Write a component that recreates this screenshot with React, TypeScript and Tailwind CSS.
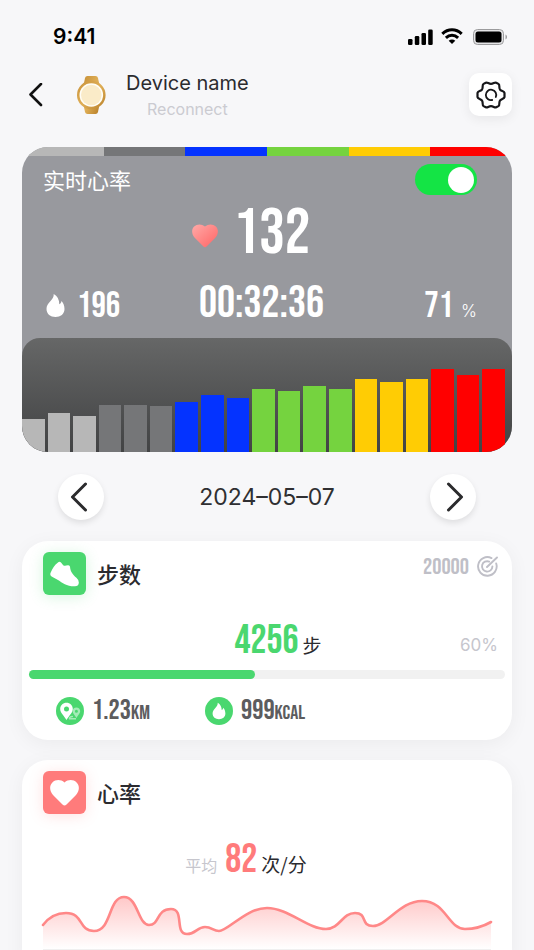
import React, { useState } from "react"

const ZONES = ["bg-[#b7b7b7]", "bg-[#757678]", "bg-[#0433ff]", "bg-[#75d33f]", "bg-[#ffcc04]", "bg-[#ff0000]"]

// zone index + bar height in px
const BARS: [number, number][] = [
  [0, 33], [0, 39], [0, 36],
  [1, 47], [1, 47], [1, 46],
  [2, 50], [2, 57], [2, 54],
  [3, 63], [3, 61], [3, 66], [3, 63],
  [4, 73], [4, 70], [4, 73],
  [5, 83], [5, 77], [5, 83],
]

const NUM = "font-['Bebas_Neue','Roboto_Condensed','Liberation_Sans_Narrow',sans-serif]"
const CJK = "font-['Noto_Sans_CJK_SC',sans-serif]"
const SANS = "font-['Inter','Liberation_Sans',sans-serif]"

const FLAME = "M7.200 0C7.400 2.800 6.200 4.800 3.600 7.600C1.400 10 0 12 0 15C0 20 4 23 9 23C14 23 18 20 18 15C18 11.400 16.600 8.800 15 7C14.800 8.600 14 9.800 12.800 10.200C12.800 5.600 10.800 2 7.200 0Z"
const HEART = "M14.500 25.500Q13.500 25.500 12.500 24.500L3 15C-.6 11-.8 5.600 2.400 2.500C5.600-.6 10.600-.8 14.500 2.400C18.400-.8 23.400-.6 26.600 2.500C29.800 5.600 29.600 11 26 15L16.500 24.500Q15.500 25.500 14.500 25.500Z"
const HR_LINE = "M3 35C9 27 17 23 26 23C44 23 38 41 54 41C72 41 68 7 84 7C98 7 98 35 109 35C120 35 116 19 131 19C145 19 134 44 147 44C156 44 157 37 165 37C172 37 173 41 179 41C188 41 206 18 227 18C248 18 268 39 286 39C300 39 302 23 315 23C328 23 320 36 333 36C347 36 360 11 382 11C406 11 408 39 425 39C435 39 444 36 451 32"

function StatusBar() {
  return (
    <div className="flex h-[73px] items-center justify-between pl-[53px] pr-[26px]">
      <span className={`${SANS} text-[21px] font-semibold text-black`}>9:41</span>
      <svg width="100" height="18" viewBox="0 0 100 18" aria-hidden="true">
        <rect x="0" y="11" width="4.500" height="6" rx="1.300" />
        <rect x="6.800" y="8" width="4.500" height="9" rx="1.300" />
        <rect x="13.500" y="5" width="4.500" height="12" rx="1.300" />
        <rect x="20.200" y="1.500" width="4.500" height="15.500" rx="1.300" />
        <g fill="none" stroke="#000" strokeWidth="3">
          <path d="M34.300 5.800C40 .4 48 .4 53.700 5.800" />
          <path d="M37.900 9.900C41.500 6.500 46.500 6.500 50.100 9.900" />
        </g>
        <path d="M40.700 12.700C42.600 11 45.400 11 47.300 12.700L44 16Z" />
        <rect x="65.500" y="1.500" width="30" height="15" rx="4" fill="#e4e4e6" stroke="#9b9b9d" />
        <rect x="67.500" y="3.500" width="26" height="11" rx="2.500" />
        <path d="M97.500 6.500V11.500C99.500 10.800 99.500 7.200 97.500 6.500Z" fill="#9b9b9d" />
      </svg>
    </div>
  )
}

function Watch() {
  return (
    <svg width="30" height="40" viewBox="0 0 30 40" aria-hidden="true">
      <defs>
        <linearGradient id="gold" x1="0" x2="1" y1="0" y2="1">
          <stop offset="0" stopColor="#c8923a" />
          <stop offset=".5" stopColor="#dfae56" />
          <stop offset="1" stopColor="#b87f28" />
        </linearGradient>
      </defs>
      <path d="M8 8L9 3Q9.500 1 11.500 1H19.500Q21.500 1 22 3L23 8V32L22 37Q21.500 39 19.500 39H11.500Q9.500 39 9 37L8 32Z" fill="url(#gold)" />
      <circle cx="15.300" cy="20" r="14.300" fill="url(#gold)" />
      <circle cx="15.300" cy="20" r="11.800" fill="#fffdf6" />
      <circle cx="15.300" cy="20" r="10.300" fill="#faebc8" />
    </svg>
  )
}

function Header() {
  return (
    <header className="flex h-[43px] items-center pl-6 pr-[22px]">
      <button aria-label="Back" className="flex w-6 justify-center">
        <svg width="14" height="24" viewBox="0 0 14 24" fill="none" stroke="#111" strokeWidth="2.600" strokeLinecap="round" strokeLinejoin="round"><path d="M12 1L1.500 11.500L12 22" /></svg>
      </button>
      <span className="ml-7"><Watch /></span>
      <div className={`${SANS} ml-5 flex flex-col items-center pt-[3px]`}>
        <span className="text-[20px] leading-6 text-[#2b2b2f]">Device name</span>
        <button className="mt-0.5 text-[16px] leading-6 text-[#cbcbd1]">Reconnect</button>
      </div>
      <button aria-label="Settings" className="ml-auto flex size-[43px] items-center justify-center rounded-[10px] bg-white shadow-[0_3px_12px_rgba(0,0,0,0.07)]">
        <svg width="30" height="28" viewBox="0 0 30 28" fill="none" stroke="#17171a" strokeWidth="2.200" strokeLinecap="round" strokeLinejoin="round">
          <path d="M9.800 1.700C11.500 1 12.500 2.900 15 2.900S18.500 1 20.200 1.700L22.400 2.900C24.200 4 22.600 6 23.900 8.300C25.200 10.400 28.200 9.800 28.500 12V16C28.200 18.200 25.200 17.600 23.900 19.700C22.600 22 24.200 24 22.400 25.100L20.200 26.300C18.500 27 17.500 25.100 15 25.100S11.500 27 9.800 26.300L7.600 25.100C5.800 24 7.400 22 6.100 19.700C4.800 17.600 1.800 18.200 1.500 16V12C1.800 9.800 4.800 10.400 6.100 8.300C7.400 6 5.800 4 7.600 2.900Z" />
          <path d="M16.200 19A5.200 5.200 0 1 1 19.800 16" strokeWidth="1.800" />
        </svg>
      </button>
    </header>
  )
}

function LiveCard() {
  const [on, setOn] = useState(true)
  return (
    <section className="mx-[22px] mt-[31px] overflow-hidden rounded-[26px] bg-[#98999e] text-white">
      <div className="grid h-[9px] grid-cols-6">
        {ZONES.map(z => <div key={z} className={z} />)}
      </div>
      <div className="flex h-[47px] items-center justify-between pl-[21px] pr-[35px]">
        <h2 id="live" className={`${CJK} pb-0.5 text-[22px] leading-8`}>实时心率</h2>
        <label className="relative flex h-[31px] w-[62px] items-center rounded-full bg-[#14e445] p-[3px]">
          <input type="checkbox" role="switch" aria-labelledby="live" checked={on} onChange={e => setOn(e.target.checked)} className="peer absolute inset-0 size-full cursor-pointer appearance-none" />
          <span className="pointer-events-none size-[26px] rounded-full bg-white peer-checked:ml-auto" />
        </label>
      </div>
      <div className="flex h-[58px] items-center justify-center gap-4 pr-8">
        <svg width="26" height="24" viewBox="0 0 29 26" className="mt-2">
          <defs>
            <linearGradient id="pulse" x1="0" x2="1" y1="0" y2="1">
              <stop offset="0" stopColor="#ffaaa8" />
              <stop offset="1" stopColor="#ff6464" />
            </linearGradient>
          </defs>
          <path d={HEART} fill="url(#pulse)" />
        </svg>
        <span className={`${NUM} pt-1 text-[64px] leading-[64px]`}>132</span>
      </div>
      <div className="grid h-[77px] grid-cols-[1fr_auto_1fr] items-baseline pt-[13px] pl-6 pr-[35px]">
        <div className="flex items-baseline gap-3">
          <svg width="19" height="23" viewBox="0 0 18 23" fill="#fff"><path d={FLAME} /></svg>
          <span className={`${NUM} text-[36px]`}>196</span>
        </div>
        <span className={`${NUM} text-[45px] leading-[60px]`}>00:32:36</span>
        <div className="flex items-baseline justify-end gap-2">
          <span className={`${NUM} text-[36px]`}>71</span>
          <span className={`${SANS} text-[17px] font-light`}>%</span>
        </div>
      </div>
      <div className="flex h-[114px] items-end gap-[3px] rounded-t-[18px] bg-linear-to-b from-[#666767] to-[#424344] pr-[7px]">
        {BARS.map(([zone, h], i) => (
          <div key={i} className={`flex-1 ${ZONES[zone]}`} style={{ height: h }} />
        ))}
      </div>
    </section>
  )
}

function DateNav() {
  const round = "flex size-[46px] items-center justify-center rounded-full bg-white shadow-[0_3px_6px_rgba(0,0,0,0.1)]"
  return (
    <nav className="mt-[22px] flex items-center justify-between px-[58px]">
      <button aria-label="Previous day" className={round}>
        <svg width="18" height="30" viewBox="0 0 18 30" fill="none" stroke="#2b2b2d" strokeWidth="3" strokeLinecap="round" strokeLinejoin="round" className="mr-1"><path d="M15.500 2L2.500 15L15.500 28" /></svg>
      </button>
      <time dateTime="2024-05-07" className={`${SANS} text-[23px] leading-8 text-[#2f2f32]`}>2024–05–07</time>
      <button aria-label="Next day" className={round}>
        <svg width="18" height="30" viewBox="0 0 18 30" fill="none" stroke="#2b2b2d" strokeWidth="3" strokeLinecap="round" strokeLinejoin="round" className="ml-1"><path d="M2.500 2L15.500 15L2.500 28" /></svg>
      </button>
    </nav>
  )
}

function StepsCard() {
  return (
    <section className="mx-[22px] mt-[21px] rounded-[26px] bg-white px-[7px] pt-[11px] pb-[13px] shadow-[0_4px_20px_rgba(0,0,0,0.05)]">
      <div className="flex items-start pl-3.5 pr-[7px]">
        <div className="flex size-[43px] items-center justify-center rounded-md bg-[#4ad76f] shadow-[0_2px_14px_rgba(74,215,111,0.22)]">
          <svg width="29" height="26" viewBox="0 0 29 26" fill="#fff"><path d="M8 1.400Q9.600 .2 11 1.600L13.200 4.200Q14.400 5 16.200 4.600L18 4.200Q19.800 4 20 5.800C20.400 11 23 13.800 26.400 16.800Q29 19 28.800 22Q28.400 25.200 25 25.300C17 25.600 12.500 22 8 19L1.600 15.400Q-.4 14 .6 11.800C2.400 7.500 4.500 4 8 1.400Z" /></svg>
        </div>
        <h2 className={`${CJK} ml-[11px] text-[22px] leading-[42px] font-medium text-[#2b2b2f]`}>步数</h2>
        <div className="ml-auto mt-px flex items-center gap-2 text-[#bfbfc7]">
          <span className={`${NUM} pt-0.5 text-[23px] leading-6`}>20000</span>
          <svg width="21" height="21" viewBox="0 0 21 21" fill="none" stroke="currentColor" strokeWidth="1.900" strokeLinecap="round">
            <path d="M14.500 2.100A9.300 9.300 0 1 0 19.200 7.500" />
            <path d="M12.200 5.600A5.200 5.200 0 1 0 15.400 10.500" />
            <path d="M10 11L20 1.500" />
          </svg>
        </div>
      </div>
      <div className="relative mt-6 flex h-11 items-baseline justify-center gap-1 pl-[22px]">
        <span className={`${NUM} text-[40px] leading-[44px] text-[#4ad76f]`}>4256</span>
        <span className={`${CJK} text-[19px] leading-6 text-[#2b2b2f]`}>步</span>
        <span className={`${SANS} absolute right-[7px] bottom-1.5 text-[17px] leading-6 text-[#c6c6cd]`}>60%</span>
      </div>
      <div role="progressbar" aria-valuenow={60} className="mt-[7px] h-[9px] rounded-full bg-[#f1f1f1]">
        <div className="h-full rounded-full bg-[#4ad76f]" style={{ width: "47.5%" }} />
      </div>
      <div className="mt-[15px] flex items-center pl-[27px] text-[#5c5c5e]">
        <svg width="28" height="28" viewBox="0 0 28 28">
          <circle cx="14" cy="14" r="14" fill="#4ad76f" />
          <path fillRule="evenodd" d="M10.500 5.800C14 5.800 16.800 8.400 16.800 12C16.800 16 13 18.500 10.500 23C8 18.500 4.200 16 4.200 12C4.200 8.400 7 5.800 10.500 5.800ZM10.500 9.600A2.500 2.500 0 1 0 10.500 14.600A2.500 2.500 0 1 0 10.500 9.600Z" fill="#fff" />
          <path fillRule="evenodd" d="M20.400 10.600C22.600 10.600 24.200 12.200 24.200 14.300C24.200 16.600 22 18 20.400 21C18.800 18 16.600 16.600 16.600 14.300C16.600 12.200 18.200 10.600 20.400 10.600ZM20.400 12.700A1.500 1.500 0 1 0 20.400 15.700A1.500 1.500 0 1 0 20.400 12.700Z" fill="#a4ebb7" />
          <path d="M20 21.800H13.500C13 20.200 14.500 19.400 17 19.600" fill="none" stroke="#a4ebb7" strokeWidth="1.400" />
        </svg>
        <span className={`${NUM} ml-2 w-[113px] pt-[3px] text-[28px] leading-7`}>1.23<span className="text-[20px]">KM</span></span>
        <svg width="28" height="28" viewBox="0 0 28 28">
          <circle cx="14" cy="14" r="14" fill="#4ad76f" />
          <path d={FLAME} fill="#fff" transform="translate(7.600 5.800) scale(.71)" />
        </svg>
        <span className={`${NUM} ml-2 pt-[3px] text-[28px] leading-7`}>999<span className="text-[20px]">KCAL</span></span>
      </div>
    </section>
  )
}

function HeartCard() {
  return (
    <section className="mx-[22px] mt-5 rounded-[26px] bg-white px-[7px] pt-[11px] pb-6 shadow-[0_4px_20px_rgba(0,0,0,0.05)]">
      <div className="flex items-start pl-3.5">
        <div className="flex size-[43px] items-center justify-center rounded-md bg-[#ff7b7b] shadow-[0_2px_14px_rgba(255,123,123,0.22)]">
          <svg width="29" height="26" viewBox="0 0 29 26" fill="#fff"><path d={HEART} /></svg>
        </div>
        <h2 className={`${CJK} ml-[11px] text-[22px] leading-[42px] font-medium text-[#2b2b2f]`}>心率</h2>
      </div>
      <div className="mt-6 flex h-11 items-baseline justify-center pr-[42px]">
        <span className={`${CJK} mr-2 text-[16px] leading-6 text-[#c6c6cd]`}>平均</span>
        <span className={`${NUM} mr-1 text-[40px] leading-[44px] text-[#ff7b7b]`}>82</span>
        <span className={`${CJK} text-[19px] leading-6 text-[#2b2b2f]`}>次/分</span>
      </div>
      <svg viewBox="0 0 454 60" className="mx-auto mt-2 block w-[454px] max-w-full">
        <defs>
          <linearGradient id="area" x1="0" x2="0" y1="0" y2="1">
            <stop offset="0" stopColor="#ff7b7b" stopOpacity=".42" />
            <stop offset="1" stopColor="#ff7b7b" stopOpacity="0" />
          </linearGradient>
        </defs>
        <path d={`${HR_LINE}V59H3Z`} fill="url(#area)" />
        <path d={HR_LINE} fill="none" stroke="#ff8888" strokeWidth="2.600" strokeLinecap="round" />
        <path d="M3 59.500H451" stroke="#f0f0f0" />
      </svg>
    </section>
  )
}

export default function App() {
  return (
    <main className="h-screen overflow-hidden bg-[#f7f7f9]">
      <StatusBar />
      <Header />
      <LiveCard />
      <DateNav />
      <StepsCard />
      <HeartCard />
    </main>
  )
}
